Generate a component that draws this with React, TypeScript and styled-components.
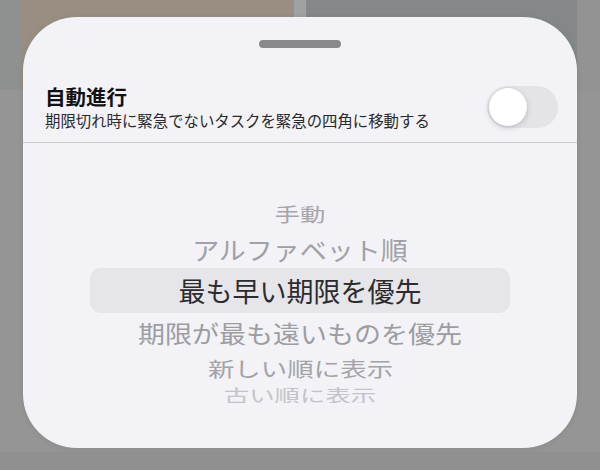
import React from "react";
import styled, { createGlobalStyle } from "styled-components";

const Global = createGlobalStyle`
  html, body { margin: 0; padding: 0; }
  body {
    width: 600px;
    height: 470px;
    overflow: hidden;
    background: #959595;
    font-family: "Noto Sans CJK JP", "Noto Sans", sans-serif;
  }
`;

const Page = styled.div`
  position: relative;
  width: 600px;
  height: 470px;
  display: flex;
  flex-direction: column;
  background: #959595;
`;

const Panels = styled.div`
  display: grid;
  grid-template-columns: 22px 272px 12px 271px 1fr;
  height: 90px;
`;

const Panel = styled.div<{ $bg: string }>`
  background: ${(p) => p.$bg};
`;

const Fill = styled.div`
  flex: 1;
`;

const BottomBar = styled.div`
  height: 18px;
  background: #909090;
`;

const Sheet = styled.div`
  position: absolute;
  top: 17px;
  left: 23px;
  right: 23px;
  height: 431px;
  border-radius: 54px;
  background: #f2f2f7;
  box-shadow: 0 1px 6px rgba(0, 0, 0, 0.08);
  display: flex;
  flex-direction: column;
  overflow: hidden;
`;

const Grabber = styled.div`
  align-self: center;
  margin-top: 23px;
  width: 82px;
  height: 8px;
  border-radius: 4px;
  background: #89898e;
`;

const Header = styled.div`
  margin-top: 36px;
  display: flex;
  align-items: center;
  justify-content: space-between;
  padding: 0 19px 0 22px;
  height: 46px;
`;

const TextBlock = styled.div`
  display: flex;
  flex-direction: column;
  gap: 2px;
`;

const Title = styled.div`
  font-size: 20.5px;
  line-height: 24px;
  font-weight: 700;
  color: #111113;
`;

const Subtitle = styled.div`
  font-size: 15.4px;
  line-height: 20px;
  color: #2a2a2c;
`;

const Track = styled.div`
  width: 71px;
  height: 42px;
  border-radius: 21px;
  background: #e3e3e8;
  display: flex;
  align-items: center;
  padding: 0 2px;
  box-sizing: border-box;
`;

const Knob = styled.div`
  width: 38px;
  height: 38px;
  border-radius: 50%;
  background: #ffffff;
  box-shadow: 0 2px 6px rgba(0, 0, 0, 0.16), 0 0 0 0.5px rgba(0, 0, 0, 0.05);
`;

const Separator = styled.div`
  margin-top: 12px;
  height: 1px;
  background: #cbcbd0;
`;

const Picker = styled.div`
  height: 260px;
  padding-top: 53px;
  box-sizing: border-box;
  overflow: hidden;
  display: flex;
  flex-direction: column;
`;

const Row = styled.div<{ $h: number; $selected?: boolean }>`
  flex: 0 0 ${(p) => p.$h}px;
  min-height: 0;
  display: flex;
  align-items: center;
  justify-content: center;
  margin: 0 67px;
  border-radius: 11px;
  background: ${(p) => (p.$selected ? "#e5e5ea" : "transparent")};
`;

const Label = styled.span<{ $sx: number; $sy: number; $color: string }>`
  font-size: 27px;
  line-height: 32px;
  white-space: nowrap;
  color: ${(p) => p.$color};
  transform: scale(${(p) => p.$sx}, ${(p) => p.$sy});
`;

const items = [
  { text: "手動", h: 35, sx: 0.94, sy: 0.72, color: "#a6a6aa" },
  { text: "アルファベット順", h: 37, sx: 1, sy: 0.92, color: "#a1a1a5" },
  { text: "最も早い期限を優先", h: 45, sx: 1, sy: 1, color: "#2c2c2e", selected: true },
  { text: "期限が最も遠いものを優先", h: 39, sx: 1, sy: 0.88, color: "#9d9da1" },
  { text: "新しい順に表示", h: 34, sx: 0.98, sy: 0.76, color: "#a3a3a7" },
  { text: "古い順に表示", h: 18, sx: 0.94, sy: 0.62, color: "#c4c4c8" },
];

export default function App() {
  return (
    <>
      <Global />
      <Page>
        <Panels>
          <Panel $bg="#8f9191" />
          <Panel $bg="#9a8e82" />
          <Panel $bg="#9fa2a1" />
          <Panel $bg="#84888a" />
          <Panel $bg="#939393" />
        </Panels>
        <Fill />
        <BottomBar />
        <Sheet>
          <Grabber />
          <Header>
            <TextBlock>
              <Title>自動進行</Title>
              <Subtitle>期限切れ時に緊急でないタスクを緊急の四角に移動する</Subtitle>
            </TextBlock>
            <Track>
              <Knob />
            </Track>
          </Header>
          <Separator />
          <Picker>
            {items.map((it) => (
              <Row key={it.text} $h={it.h} $selected={it.selected}>
                <Label $sx={it.sx} $sy={it.sy} $color={it.color}>
                  {it.text}
                </Label>
              </Row>
            ))}
          </Picker>
        </Sheet>
      </Page>
    </>
  );
}
